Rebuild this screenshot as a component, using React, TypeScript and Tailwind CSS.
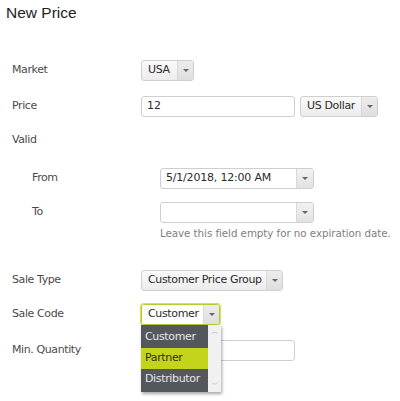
const label = "text-[11px] tracking-[-0.4px] text-[#4a4a4a] whitespace-nowrap";

function Caret() {
  return (
    <span className="h-0 w-0 border-x-[3px] border-t-[3px] border-x-transparent border-t-[#666]" />
  );
}

function DropDown({ value, width, focused }: { value: string; width: string; focused?: boolean }) {
  return (
    <div
      className={`flex h-[21px] ${width} items-stretch overflow-hidden rounded-[3px] border ${
        focused ? "border-[#b7cb2c] shadow-[0_0_0_1px_#d3e05a]" : "border-[#cfcfcf]"
      } bg-gradient-to-b from-[#fafafa] to-[#ececec]`}
    >
      <span
        className={`flex flex-1 items-center whitespace-nowrap pl-[6px] text-[11px] tracking-[-0.35px] text-[#2b2b2b] ${
          focused ? "bg-white" : ""
        }`}
      >
        {value}
      </span>
      <span className="flex w-[16px] shrink-0 items-center justify-center border-l border-[#d8d8d8] bg-gradient-to-b from-[#ececec] to-[#dedede]">
        <Caret />
      </span>
    </div>
  );
}

function DateBox({ value }: { value?: string }) {
  return (
    <div className="flex h-[21px] w-[154px] items-stretch overflow-hidden rounded-[3px] border border-[#cfcfcf] bg-white">
      <span className="flex flex-1 items-center whitespace-nowrap px-[5px] text-[11px] tracking-[-0.2px] text-[#2b2b2b]">
        {value}
      </span>
      <span className="flex w-[17px] shrink-0 items-center justify-center border-l border-[#d8d8d8] bg-gradient-to-b from-[#f2f2f2] to-[#e2e2e2]">
        <Caret />
      </span>
    </div>
  );
}

function TextBox({ value }: { value?: string }) {
  return (
    <div className="flex h-[21px] w-[154px] items-center rounded-[3px] border border-[#cfcfcf] bg-white px-[5px] text-[11px] text-[#2b2b2b]">
      {value}
    </div>
  );
}

export default function App() {
  const options = ["Customer", "Partner", "Distributor"];
  return (
    <div className="relative h-[401px] w-[400px] bg-white font-['DejaVu_Sans',Verdana,sans-serif]">
      <h1 className="px-[6px] pt-[3px] font-['Liberation_Sans',Arial,sans-serif] text-[15.5px] leading-[20px] text-[#222]">
        New Price
      </h1>

      <div className="flex flex-col pl-[12px]">
        <div className="mt-[37px] flex h-[21px] items-center">
          <span className={`w-[129px] ${label}`}>Market</span>
          <DropDown value="USA" width="w-[53px]" />
        </div>

        <div className="mt-[15px] flex h-[21px] items-center">
          <span className={`w-[129px] ${label}`}>Price</span>
          <TextBox value="12" />
          <div className="ml-[5px]">
            <DropDown value="US Dollar" width="w-[78px]" />
          </div>
        </div>

        <div className="mt-[13px] flex h-[21px] items-center">
          <span className={label}>Valid</span>
        </div>

        <div className="mt-[17px] flex h-[21px] items-center pl-[20px]">
          <span className={`w-[128px] ${label}`}>From</span>
          <DateBox value="5/1/2018, 12:00 AM" />
        </div>

        <div className="mt-[13px] flex items-start pl-[20px]">
          <span className={`flex h-[21px] w-[128px] items-center ${label}`}>To</span>
          <div className="flex flex-col">
            <DateBox />
            <span className="mt-[3px] whitespace-nowrap text-[10.3px] leading-[14px] tracking-[-0.05px] text-[#808080]">
              Leave this field empty for no expiration date.
            </span>
          </div>
        </div>

        <div className="mt-[30px] flex h-[21px] items-center">
          <span className={`w-[129px] ${label}`}>Sale Type</span>
          <DropDown value="Customer Price Group" width="w-[142px]" />
        </div>

        <div className="relative mt-[13px] flex h-[21px] items-center">
          <span className={`w-[129px] ${label}`}>Sale Code</span>
          <DropDown value="Customer" width="w-[79px]" focused />
          <div className="absolute left-[129px] top-[21px] z-10 flex h-[67px] w-[80px] bg-[#54585d] shadow-[1px_2px_3px_rgba(0,0,0,0.35)]">
            <ul className="flex flex-1 flex-col pt-[2px]">
              {options.map((o) => (
                <li
                  key={o}
                  className={`flex h-[21px] items-center whitespace-nowrap px-[4px] text-[11px] tracking-[-0.35px] ${
                    o === "Partner" ? "bg-[#c4d41a] text-[#2f2f2f]" : "text-[#e6e6e6]"
                  }`}
                >
                  {o}
                </li>
              ))}
            </ul>
            <div className="flex w-[13px] flex-col items-center justify-between bg-[#f1f1f1] py-[3px] text-[8px] leading-none text-[#b0b0b0]">
              <span>︿</span>
              <span>﹀</span>
            </div>
          </div>
        </div>

        <div className="mt-[15px] flex h-[21px] items-center">
          <span className={`w-[129px] ${label}`}>Min. Quantity</span>
          <TextBox />
        </div>
      </div>
    </div>
  );
}
